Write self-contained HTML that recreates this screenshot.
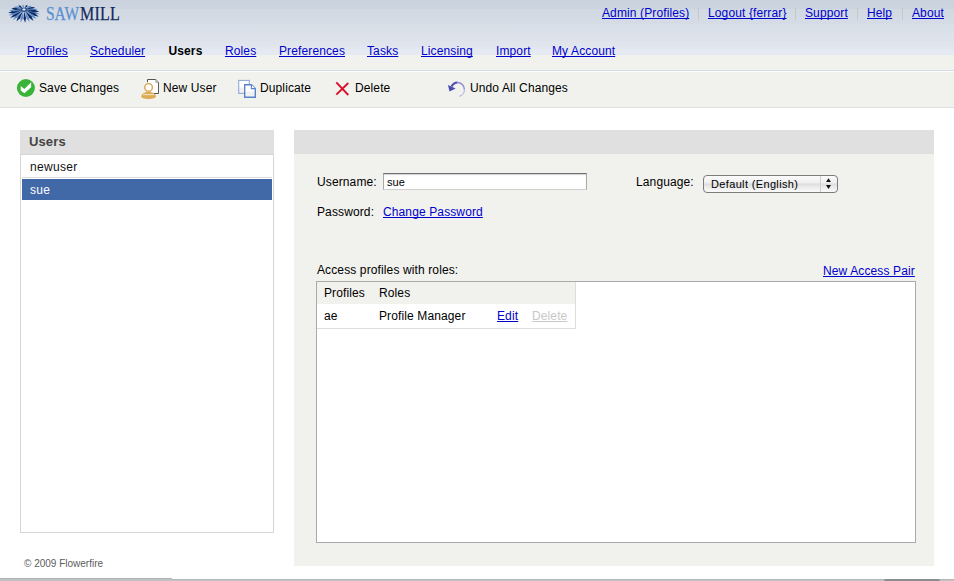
<!DOCTYPE html>
<html><head><meta charset="utf-8">
<style>
*{margin:0;padding:0;box-sizing:border-box}
html,body{width:954px;height:581px;overflow:hidden;background:#fff;font-family:"Liberation Sans",sans-serif;font-size:12px;color:#000}
.a{position:absolute;white-space:nowrap;line-height:14px;letter-spacing:0.12px}
a,.lnk{color:#0000cc;text-decoration:underline;text-decoration-skip-ink:none}
#hdr{position:absolute;left:0;top:0;width:954px;height:55px;background:linear-gradient(#cad2de 0,#ccd4e0 9px,#d1d9e3 9px,#d5dce6 24px,#d9dfe8 24px,#dce2ea 38px,#dee3eb 38px,#e1e6ee 47px,#e3e8f0 47px,#e6eaf2 55px)}
#band{position:absolute;left:0;top:55px;width:954px;height:15px;background:#f1f2ed}
#l70{position:absolute;left:0;top:70px;width:954px;height:1px;background:#d3dce6}
#l71{position:absolute;left:0;top:71px;width:954px;height:1px;background:#fdfdfd}
#tb{position:absolute;left:0;top:72px;width:954px;height:35px;background:#f1f2ed}
#l107{position:absolute;left:0;top:107px;width:954px;height:1px;background:#dfdfe4}
.sep{position:absolute;top:8px;width:1px;height:12px;background:#c8c8c2}
</style></head><body>
<div id="hdr"></div>
<div id="band"></div>
<div id="l70"></div>
<div id="l71"></div>
<div id="tb"></div>
<div id="l107"></div>


<!-- logo -->
<svg style="position:absolute;left:0;top:0" width="130" height="30" viewBox="0 0 130 30"><path d="M25.7 10.0L34.1 14.0L39.9 14.3L34.9 11.4Z" fill="#5b8fd0"/><path d="M25.6 10.3L33.3 15.6L38.9 16.8L34.5 13.1Z" fill="#13295c"/><path d="M25.4 10.6L31.6 16.9L36.7 19.1L33.2 14.8Z" fill="#5b8fd0"/><path d="M25.2 10.9L29.4 17.9L33.5 20.9L31.4 16.3Z" fill="#13295c"/><path d="M24.7 11.1L26.6 18.5L29.6 22.1L28.9 17.4Z" fill="#5b8fd0"/><path d="M24.2 11.3L23.5 18.5L25.2 22.7L26.0 18.2Z" fill="#13295c"/><path d="M23.5 11.2L20.5 17.9L20.6 22.5L22.9 18.5Z" fill="#5b8fd0"/><path d="M23.0 11.0L17.8 16.9L16.4 21.6L20.0 18.3Z" fill="#13295c"/><path d="M22.7 10.7L15.6 15.6L12.8 20.1L17.4 17.5Z" fill="#5b8fd0"/><path d="M22.5 10.4L14.1 14.0L10.1 18.0L15.5 16.3Z" fill="#13295c"/><path d="M22.3 10.2L13.2 12.3L8.5 15.6L14.2 14.8Z" fill="#5b8fd0"/><path d="M22.2 9.9L13.2 10.6L8.1 13.1L13.8 13.2Z" fill="#13295c"/><path d="M22.2 9.6L14.0 8.9L9.1 10.6L14.2 11.5Z" fill="#5b8fd0"/><path d="M22.2 9.3L15.5 7.5L11.3 8.3L15.3 9.9Z" fill="#13295c"/><path d="M22.3 9.0L17.8 6.4L14.5 6.5L17.1 8.5Z" fill="#5b8fd0"/><path d="M22.6 8.4L20.6 5.7L18.4 5.3L19.4 7.3Z" fill="#13295c"/><path d="M23.6 7.8L24.0 5.7L22.8 4.7L22.2 6.1Z" fill="#5b8fd0"/><path d="M25.1 8.0L27.3 6.7L27.4 4.9L25.7 5.5Z" fill="#13295c"/><path d="M25.6 8.7L29.8 7.9L31.6 5.8L28.9 6.0Z" fill="#5b8fd0"/><path d="M25.8 9.2L31.9 9.2L35.2 7.3L31.4 6.9Z" fill="#13295c"/><path d="M25.8 9.5L33.3 10.7L37.9 9.4L33.3 8.2Z" fill="#5b8fd0"/><path d="M25.8 9.8L34.1 12.3L39.5 11.8L34.5 9.7Z" fill="#13295c"/><ellipse cx="24" cy="9.7" rx="3.6" ry="2.2" fill="#2c5494"/><ellipse cx="24" cy="9.5" rx="1.6" ry="0.9" fill="#eef2f8"/></svg>
<span id="saw" class="a" style="left:45.9px;top:3.9px;font-family:'Liberation Serif',serif;font-size:18px;line-height:20px;letter-spacing:0;-webkit-text-stroke:0.25px #5a8fd0;color:#5a8fd0;transform-origin:0 0;transform:scaleX(0.86)">SAW</span><span id="mill" class="a" style="left:79.5px;top:3.9px;font-family:'Liberation Serif',serif;font-size:18px;line-height:20px;letter-spacing:0.2px;-webkit-text-stroke:0.25px #13295c;color:#13295c;transform-origin:0 0;transform:scaleX(0.89)">MILL</span>

<!-- toolbar icons -->
<svg style="position:absolute;left:0;top:71px" width="480" height="36" viewBox="0 71 480 36">
<circle cx="25.9" cy="88" r="9" fill="#39b439"/>
<path d="M20.7 86.1L24.3 89.1L31.2 82.3L31.1 87.3L24.4 93.3L20.7 90.5Z" fill="#fff"/>
<path d="M147.5 79.5H155.8L158.5 82.4V93.5H147.5Z" fill="#fff" stroke="#555" stroke-width="1"/>
<path d="M155.8 79.5V82.4H158.5" fill="#ccc" stroke="#888" stroke-width="0.6"/>
<rect x="146.8" y="82.2" width="1.6" height="11" fill="#f7f7f4"/>
<path d="M141.3 96.6Q141.6 92.2 148.6 92.1Q155.6 92.2 155.9 96.6Q155.9 99 148.6 99Q141.3 99 141.3 96.6Z" fill="#dcab55"/>
<path d="M143 94.6H154.2" stroke="#f4e2bd" stroke-width="1.1"/>
<path d="M147 91.2V92.6M150.2 91.2V92.6" stroke="#d9a24a" stroke-width="1.1"/>
<circle cx="148.6" cy="87.4" r="3.8" fill="#fff" stroke="#d9a24a" stroke-width="1.4"/>
<defs><linearGradient id="pg" x1="0" y1="0" x2="0" y2="1"><stop offset="0.5" stop-color="#fff"/><stop offset="0.6" stop-color="#f0f0ec"/><stop offset="1" stop-color="#f2f2ee"/></linearGradient></defs><rect x="238.7" y="80.4" width="10.6" height="13" fill="url(#pg)" stroke="#8eaadc" stroke-width="1.1"/>
<path d="M244.7 84.7H251.4L255.3 88.6V97.2H244.7Z" fill="url(#pg)" stroke="#5b82cc" stroke-width="1.4"/>
<path d="M251.4 84.7V88.6H255.3" fill="#fff" stroke="#5b82cc" stroke-width="1.1"/>
<path d="M336.3 82.3L348.3 95M348.3 83L336.3 94.6" stroke="#d8102c" stroke-width="1.9"/>
<path d="M451.6 86.4A6.9 6.9 0 0 1 457.5 82.5" fill="none" stroke="#5050b2" stroke-width="2.2"/><path d="M457.3 82.5A6.9 6.9 0 0 1 464.4 89.4" fill="none" stroke="#8c8cce" stroke-width="1.5"/><path d="M464.4 89.2A6.9 6.9 0 0 1 459.2 96.4" fill="none" stroke="#b4b4e4" stroke-width="1.2"/><path d="M448 85L449.5 91.6L455.6 88.4Z" fill="#4a4aae"/>
<defs><linearGradient id="ug" x1="0" y1="0" x2="1" y2="1"><stop offset="0" stop-color="#4d4daf"/><stop offset="1" stop-color="#b6b6e6"/></linearGradient></defs>
</svg>

<!-- top links -->
<span class="a lnk" style="left:602px;top:6px">Admin (Profiles)</span>
<div class="sep" style="left:698px"></div>
<span class="a lnk" style="left:708px;top:6px">Logout {ferrar}</span>
<div class="sep" style="left:795px"></div>
<span class="a lnk" style="left:805px;top:6px">Support</span>
<div class="sep" style="left:857px"></div>
<span class="a lnk" style="left:867px;top:6px">Help</span>
<div class="sep" style="left:902px"></div>
<span class="a lnk" style="left:912px;top:6px">About</span>

<!-- nav -->
<span class="a lnk" style="left:27px;top:44px">Profiles</span>
<span class="a lnk" style="left:90px;top:44px">Scheduler</span>
<span class="a" style="left:168.5px;top:44px;font-weight:bold;color:#000">Users</span>
<span class="a lnk" style="left:225px;top:44px">Roles</span>
<span class="a lnk" style="left:279px;top:44px">Preferences</span>
<span class="a lnk" style="left:367px;top:44px">Tasks</span>
<span class="a lnk" style="left:421px;top:44px">Licensing</span>
<span class="a lnk" style="left:496px;top:44px">Import</span>
<span class="a lnk" style="left:552px;top:44px">My Account</span>

<!-- toolbar -->
<span class="a" style="left:39px;top:81px;color:#000">Save Changes</span>
<span class="a" style="left:163px;top:81px;color:#000">New User</span>
<span class="a" style="left:260px;top:81px;color:#000">Duplicate</span>
<span class="a" style="left:355px;top:81px;color:#000">Delete</span>
<span class="a" style="left:470px;top:81px;color:#000">Undo All Changes</span>

<!-- left panel -->
<div style="position:absolute;left:20px;top:130px;width:254px;height:403px;border:1px solid #d6d6d6;background:#fff"></div>
<div style="position:absolute;left:20px;top:130px;width:254px;height:24px;background:#e0e0e0"></div>
<div style="position:absolute;left:20px;top:154px;width:254px;height:1px;background:#d6d6d6"></div>
<span class="a" style="left:29px;top:135px;font-weight:bold;font-size:13px;color:#444">Users</span>
<span class="a" style="left:30px;top:160px;font-size:12px;letter-spacing:0.3px;color:#111">newuser</span>
<div style="position:absolute;left:22px;top:177px;width:250px;height:1px;background:#dcdcdc"></div>
<div style="position:absolute;left:22px;top:179px;width:250px;height:21px;background:#4169a7"></div>
<span class="a" style="left:30px;top:183px;font-size:12px;letter-spacing:0.3px;color:#fff">sue</span>

<span class="a" style="left:24px;top:556.5px;font-size:10px;letter-spacing:0;color:#5c5c5c">© 2009 Flowerfire</span>

<!-- right panel -->
<div style="position:absolute;left:294px;top:130px;width:640px;height:436px;background:#f1f1ed"></div>
<div style="position:absolute;left:294px;top:130px;width:640px;height:24px;background:#e0e0e0"></div>

<span class="a" style="left:317px;top:175px">Username:</span>
<div style="position:absolute;left:383px;top:173px;width:204px;height:17px;background:#fff;border:1px solid #a8a8a8;border-top-color:#707070;border-bottom-color:#d0d0d0;box-shadow:inset 0 1px 1px rgba(0,0,0,0.18)"></div>
<span class="a" style="left:387px;top:175px;font-size:11px">sue</span>
<span class="a" style="left:317px;top:205px">Password:</span>
<span class="a lnk" style="left:383px;top:205px">Change Password</span>

<span class="a" style="left:636px;top:175px">Language:</span>
<div style="position:absolute;left:703px;top:175px;width:135px;height:18px;border:1px solid #7c7c7c;border-radius:4px;background:linear-gradient(#fbfbfb,#f0f0f0 40%,#dedede 52%,#ececec 70%,#fafafa)"></div>
<span class="a" style="left:711px;top:177px;font-size:11px;letter-spacing:0.35px">Default (English)</span>
<div style="position:absolute;left:820px;top:176px;width:1px;height:16px;background:#cfcfcf"></div>
<svg style="position:absolute;left:824px;top:178px" width="10" height="12" viewBox="0 0 10 12"><path d="M4.5 0.2L7 4H2Z M2 7H7L4.5 10.9Z" fill="#111"/></svg>

<span class="a" style="left:317px;top:263px">Access profiles with roles:</span>
<span class="a lnk" style="left:823px;top:264px">New Access Pair</span>
<div style="position:absolute;left:316px;top:281px;width:600px;height:262px;background:#fff;border:1px solid #aaa"></div>
<div style="position:absolute;left:317px;top:282px;width:258px;height:22px;background:#f1f1ed"></div>
<div style="position:absolute;left:575px;top:282px;width:1px;height:46px;background:#ddd"></div>
<div style="position:absolute;left:317px;top:328px;width:259px;height:1px;background:#ddd"></div>
<span class="a" style="left:324px;top:286px">Profiles</span>
<span class="a" style="left:379px;top:286px">Roles</span>
<span class="a" style="left:324px;top:309px">ae</span>
<span class="a" style="left:379px;top:309px">Profile Manager</span>
<span class="a lnk" style="left:497px;top:309px">Edit</span>
<span class="a" style="left:532px;top:309px;color:#c8c8c8;text-decoration:underline;text-decoration-skip-ink:none">Delete</span>

<!-- bottom bar -->
<div style="position:absolute;left:0;top:579px;width:954px;height:2px;background:linear-gradient(#b6b6b6 50%,#c2c2c2 50%)"></div>
<div style="position:absolute;left:0;top:578px;width:172px;height:3px;background:linear-gradient(#b2b2b2 33%,#c0c0c0 33%)"></div>
<div style="position:absolute;left:884px;top:579px;width:56px;height:2px;background:#8c8c8c;border-radius:2px 2px 0 0"></div>
</body></html>
